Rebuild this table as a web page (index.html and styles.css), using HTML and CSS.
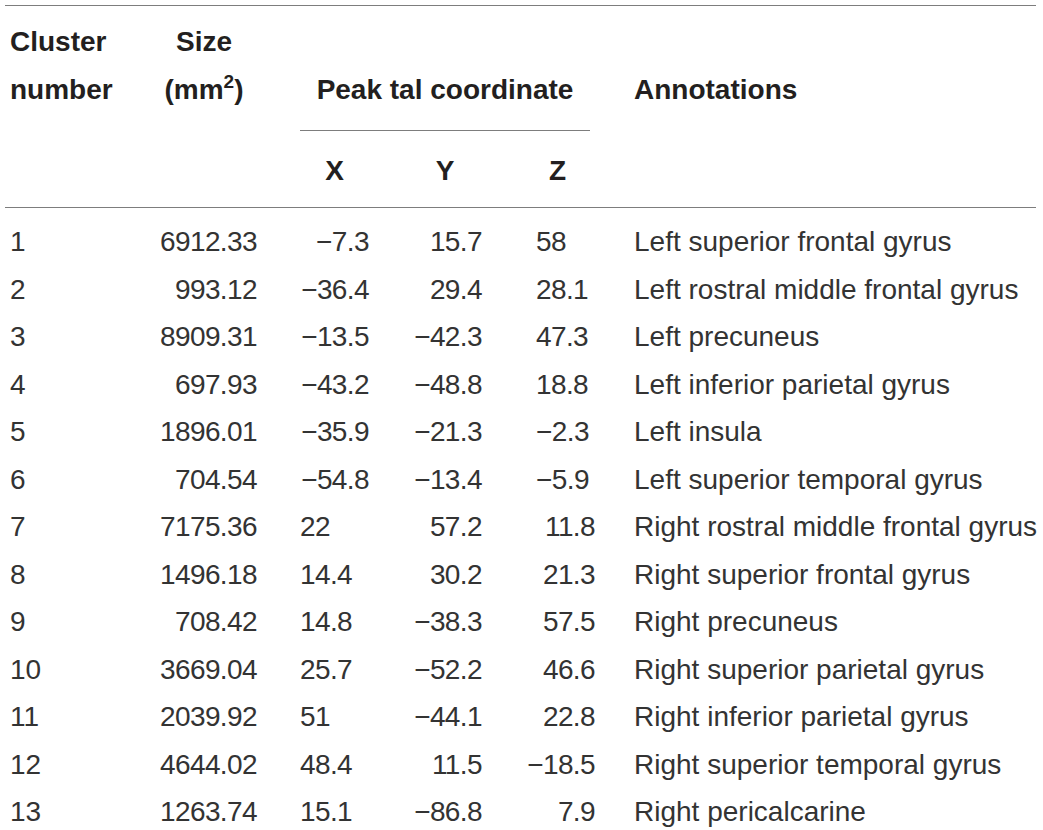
FILE: index.html
```
<!DOCTYPE html>
<html lang="en">
  <head>
    <meta charset="UTF-8" />
    <meta name="viewport" content="width=device-width, initial-scale=1.0" />
    <title>Cluster Table</title>
    <link rel="stylesheet" href="styles.css">
  </head>
  <body>
    <table class="cluster-table">
      <colgroup>
        <col class="w-num" />
        <col class="w-size" />
        <col class="w-x" />
        <col class="w-y" />
        <col class="w-z" />
        <col class="w-ann" />
      </colgroup>
      <thead>
        <tr class="head-top">
          <th rowspan="2" class="h-num">Cluster<br />number</th>
          <th rowspan="2" class="h-size">Size<br />(mm<span class="sup">2</span>)</th>
          <th colspan="3" class="h-peak"><div class="peak-label">Peak tal coordinate</div></th>
          <th rowspan="2" class="h-ann">Annotations</th>
        </tr>
        <tr class="head-axes">
          <th class="h-x">X</th>
          <th class="h-y">Y</th>
          <th class="h-z">Z</th>
        </tr>
      </thead>
      <tbody>
        <tr class="first"><td class="c-num">1</td><td class="c-size">6912.33</td><td class="c-x">&minus;7.3</td><td class="c-y">15.7</td><td class="c-z">58</td><td class="c-ann">Left superior frontal gyrus</td></tr>
        <tr><td class="c-num">2</td><td class="c-size">993.12</td><td class="c-x">&minus;36.4</td><td class="c-y">29.4</td><td class="c-z">28.1</td><td class="c-ann">Left rostral middle frontal gyrus</td></tr>
        <tr><td class="c-num">3</td><td class="c-size">8909.31</td><td class="c-x">&minus;13.5</td><td class="c-y">&minus;42.3</td><td class="c-z">47.3</td><td class="c-ann">Left precuneus</td></tr>
        <tr><td class="c-num">4</td><td class="c-size">697.93</td><td class="c-x">&minus;43.2</td><td class="c-y">&minus;48.8</td><td class="c-z">18.8</td><td class="c-ann">Left inferior parietal gyrus</td></tr>
        <tr><td class="c-num">5</td><td class="c-size">1896.01</td><td class="c-x">&minus;35.9</td><td class="c-y">&minus;21.3</td><td class="c-z">&minus;2.3</td><td class="c-ann">Left insula</td></tr>
        <tr><td class="c-num">6</td><td class="c-size">704.54</td><td class="c-x">&minus;54.8</td><td class="c-y">&minus;13.4</td><td class="c-z">&minus;5.9</td><td class="c-ann">Left superior temporal gyrus</td></tr>
        <tr class="right"><td class="c-num">7</td><td class="c-size">7175.36</td><td class="c-x">22</td><td class="c-y">57.2</td><td class="c-z">11.8</td><td class="c-ann">Right rostral middle frontal gyrus</td></tr>
        <tr class="right"><td class="c-num">8</td><td class="c-size">1496.18</td><td class="c-x">14.4</td><td class="c-y">30.2</td><td class="c-z">21.3</td><td class="c-ann">Right superior frontal gyrus</td></tr>
        <tr class="right"><td class="c-num">9</td><td class="c-size">708.42</td><td class="c-x">14.8</td><td class="c-y">&minus;38.3</td><td class="c-z">57.5</td><td class="c-ann">Right precuneus</td></tr>
        <tr class="right"><td class="c-num">10</td><td class="c-size">3669.04</td><td class="c-x">25.7</td><td class="c-y">&minus;52.2</td><td class="c-z">46.6</td><td class="c-ann">Right superior parietal gyrus</td></tr>
        <tr class="right"><td class="c-num">11</td><td class="c-size">2039.92</td><td class="c-x">51</td><td class="c-y">&minus;44.1</td><td class="c-z">22.8</td><td class="c-ann">Right inferior parietal gyrus</td></tr>
        <tr class="right"><td class="c-num">12</td><td class="c-size">4644.02</td><td class="c-x">48.4</td><td class="c-y">11.5</td><td class="c-z">&minus;18.5</td><td class="c-ann">Right superior temporal gyrus</td></tr>
        <tr class="right"><td class="c-num">13</td><td class="c-size">1263.74</td><td class="c-x">15.1</td><td class="c-y">&minus;86.8</td><td class="c-z">7.9</td><td class="c-ann">Right pericalcarine</td></tr>
      </tbody>
    </table>
  </body>
</html>
```

FILE: styles.css
```
body {
  margin: 0;
  padding: 5px 0 0 5px;
  background-color: #fff;
  font-family: "Liberation Sans", Arial, sans-serif;
  color: #333;
  overflow: hidden;
}
.cluster-table {
  width: 1031px;
  table-layout: fixed;
  border-collapse: collapse;
  font-size: 28px;
  line-height: 48px;
  white-space: nowrap;
}
.w-num { width: 135px; }
.w-size { width: 122px; }
.w-x { width: 118px; }
.w-y { width: 112px; }
.w-z { width: 113px; }
.w-ann { width: 431px; }

.cluster-table th,
.cluster-table td {
  padding: 0;
  vertical-align: top;
}
.cluster-table thead {
  color: #231f20;
}
.cluster-table th {
  font-weight: bold;
}
.head-top th {
  border-top: 1px solid #7d7d7d;
  padding-top: 12px;
}
.h-num {
  text-align: left;
  padding-left: 5px !important;
  border-bottom: 1px solid #7d7d7d;
}
.h-size {
  text-align: center;
  padding-left: 6px !important;
  border-bottom: 1px solid #7d7d7d;
}
.sup {
  position: relative;
  top: -11px;
  font-size: 19px;
  line-height: 0;
}
.h-peak {
  padding-top: 60px !important;
}
.peak-label {
  margin: 0 15px 0 38px;
  padding-bottom: 16px;
  border-bottom: 1px solid #7d7d7d;
  text-align: center;
}
.h-ann {
  text-align: left;
  padding-top: 60px !important;
  padding-left: 29px !important;
  border-bottom: 1px solid #7d7d7d;
}
.head-axes th {
  padding-top: 16px;
  padding-bottom: 12px;
  text-align: center;
  border-bottom: 1px solid #7d7d7d;
}
.head-axes .h-x { padding-left: 38px; padding-right: 11px; }
.head-axes .h-y { padding-left: 28px; padding-right: 10px; }
.head-axes .h-z { padding-left: 46px; padding-right: 28px; }

.cluster-table td {
  line-height: 47.5px;
}
.cluster-table tr.first td {
  padding-top: 10px;
}
.c-size,
.c-x,
.c-y,
.c-z {
  letter-spacing: -0.6px;
}
.c-num {
  padding-left: 5px !important;
}
.c-size {
  text-align: right;
  padding-right: 5px !important;
}
.c-x {
  text-align: right;
  padding-left: 20px !important;
  padding-right: 11px !important;
}
.c-y {
  text-align: right;
  padding-right: 10px !important;
}
.c-z {
  text-align: left;
  padding-left: 44px !important;
  padding-right: 10px !important;
}
.c-ann {
  padding-left: 29px !important;
}
tr.right .c-x {
  text-align: left;
  padding-left: 38px !important;
}
tr.right .c-z {
  text-align: right;
  padding-left: 10px !important;
}
```
